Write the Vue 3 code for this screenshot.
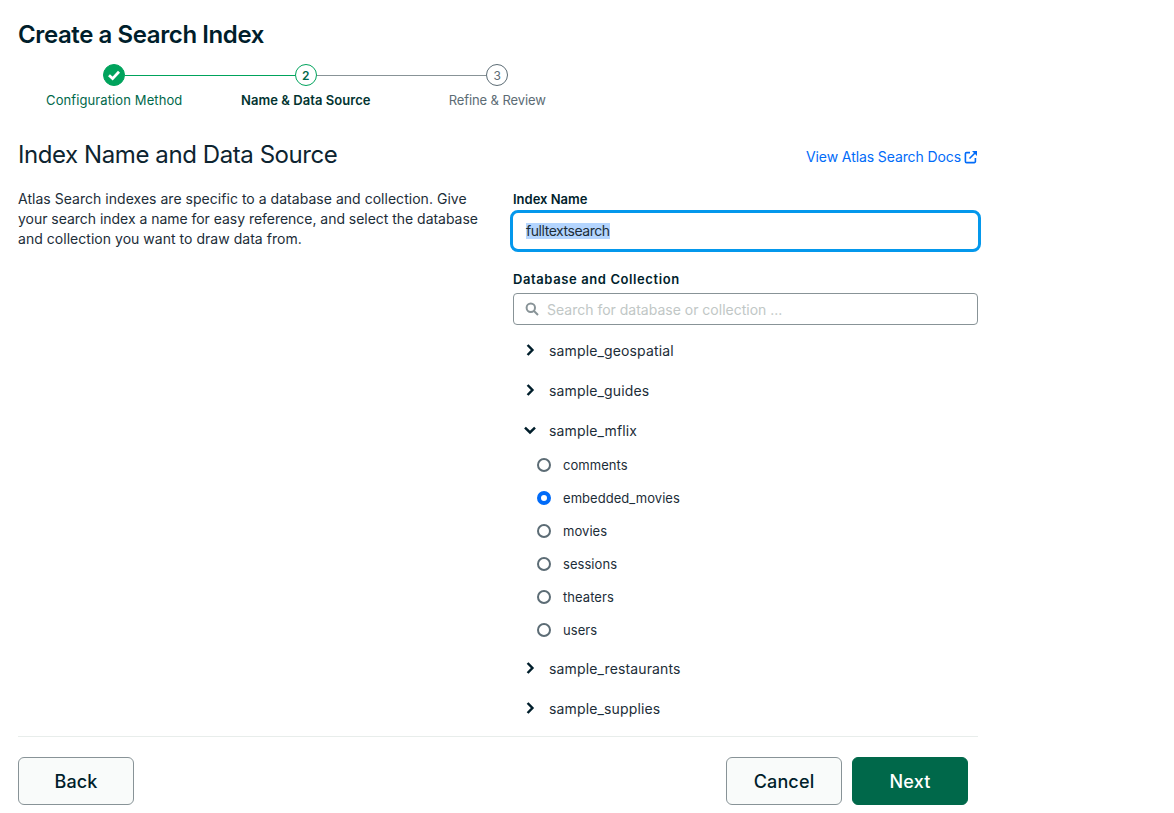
<script setup>
const before = ['sample_geospatial', 'sample_guides']
const collections = ['comments', 'embedded_movies', 'movies', 'sessions', 'theaters', 'users']
const after = ['sample_restaurants', 'sample_supplies']
</script>

<template>
  <div class="page">
    <h1 class="title">Create a Search Index</h1>
    <div class="stepper">
      <div class="step done">
        <div class="track">
          <span class="line hidden"></span>
          <span class="dot filled">
            <svg width="16" height="16" viewBox="0 0 16 16"><path d="M3 8.3 6.6 11.6 13 4.8" fill="none" stroke="#fff" stroke-width="2.8"/></svg>
          </span>
          <span class="line green"></span>
        </div>
        <div class="label">Configuration Method</div>
      </div>
      <div class="step current">
        <div class="track">
          <span class="line green"></span>
          <span class="dot">2</span>
          <span class="line grey"></span>
        </div>
        <div class="label">Name &amp; Data Source</div>
      </div>
      <div class="step todo">
        <div class="track">
          <span class="line grey"></span>
          <span class="dot">3</span>
          <span class="line hidden"></span>
        </div>
        <div class="label">Refine &amp; Review</div>
      </div>
    </div>

    <div class="head">
      <h2 class="subtitle">Index Name and Data Source</h2>
      <a class="docs">View Atlas Search Docs
        <svg width="14" height="14" viewBox="0 0 14 14" fill="none" stroke="#016bf8" stroke-width="1.6">
          <path d="M6 2.6H2.6a1.2 1.2 0 0 0-1.2 1.2v7.6a1.2 1.2 0 0 0 1.2 1.2h7.6a1.2 1.2 0 0 0 1.2-1.2V8"/>
          <path d="M5.5 8.5 12 2"/>
          <path d="M8 1h5v5z" fill="#016bf8" stroke="none"/>
        </svg>
      </a>
    </div>

    <div class="columns">
      <p class="desc">Atlas Search indexes are specific to a database and collection. Give<br><span class="tight">your search index a name for easy reference, and select the database</span><br>and collection you want to draw data from.</p>
      <div class="form">
        <div class="field-label">Index Name</div>
        <div class="name-input"><span class="selected">fulltextsearch</span></div>
        <div class="field-label second">Database and Collection</div>
        <div class="search">
          <svg width="14" height="14" viewBox="0 0 14 14" fill="none" stroke="#889397" stroke-width="2">
            <circle cx="5.8" cy="5.8" r="4.2"/>
            <path d="M9 9 13 13"/>
          </svg>
          <span>Search for database or collection ...</span>
        </div>
        <div class="tree">
          <div v-for="d in before" :key="d" class="db">
            <svg class="chev" width="16" height="16" viewBox="0 0 16 16"><path d="M5.6 3 10.4 8 5.6 13" fill="none" stroke="#001e2b" stroke-width="2.5"/></svg>
            <span>{{ d }}</span>
          </div>
          <div class="db">
            <svg class="chev" width="16" height="16" viewBox="0 0 16 16"><path d="M3 5.6 8 10.4 13 5.6" fill="none" stroke="#001e2b" stroke-width="2.5"/></svg>
            <span>sample_mflix</span>
          </div>
          <div class="colls">
            <div v-for="c in collections" :key="c" class="coll">
              <span class="radio" :class="{ on: c === 'embedded_movies' }"></span>
              <span>{{ c }}</span>
            </div>
          </div>
          <div v-for="d in after" :key="d" class="db">
            <svg class="chev" width="16" height="16" viewBox="0 0 16 16"><path d="M5.6 3 10.4 8 5.6 13" fill="none" stroke="#001e2b" stroke-width="2.5"/></svg>
            <span>{{ d }}</span>
          </div>
        </div>
      </div>
    </div>

    <div class="footer">
      <button class="btn">Back</button>
      <div class="right">
        <button class="btn">Cancel</button>
        <button class="btn primary">Next</button>
      </div>
    </div>
  </div>
</template>

<style>
html, body { margin: 0; background: #fff; }
</style>

<style scoped>
.page {
  width: 960px;
  padding-left: 18px;
  font-family: Inter, "Liberation Sans", sans-serif;
  color: #001e2b;
}
.title {
  margin: 0;
  padding-top: 21px;
  font-size: 24px;
  line-height: 28px;
  font-weight: 600;
  letter-spacing: -0.4px;
}
.stepper {
  display: flex;
  margin-top: 14px;
  padding-left: 0.5px;
}
.step {
  width: 191.5px;
  display: flex;
  flex-direction: column;
  align-items: center;
}
.track {
  width: 100%;
  height: 24px;
  display: flex;
  align-items: center;
}
.line { flex: 1; height: 1px; }
.line.hidden { background: transparent; }
.line.green { background: #00a35c; }
.line.grey { background: #889397; }
.dot {
  width: 22px;
  height: 22px;
  box-sizing: border-box;
  border-radius: 50%;
  border: 1px solid #00a35c;
  display: flex;
  align-items: center;
  justify-content: center;
  font-size: 12px;
  font-weight: 600;
  color: #00684a;
}
.dot.filled { background: #00a35c; }
.todo .dot { border-color: #5c6c75; color: #5c6c75; font-weight: 400; }
.label {
  margin-top: 3px;
  font-size: 13px;
  line-height: 20px;
  white-space: nowrap;
}
.done .label { color: #00684a; letter-spacing: 0.1px; }
.current .label { color: #023430; font-weight: 600; letter-spacing: 0.05px; }
.todo .label { color: #5c6c75; letter-spacing: -0.1px; }
.head {
  display: flex;
  justify-content: space-between;
  align-items: center;
  margin-top: 29px;
}
.subtitle {
  margin: 0;
  font-size: 24px;
  line-height: 32px;
  font-weight: 400;
  letter-spacing: -0.42px;
  color: #0d2430;
}
.docs {
  display: flex;
  align-items: center;
  gap: 3px;
  margin-top: 4px;
  font-size: 14px;
  line-height: 20px;
  color: #016bf8;
  letter-spacing: -0.1px;
}
.columns {
  display: flex;
  justify-content: space-between;
  margin-top: 18px;
}
.desc {
  width: 470px;
  margin: 0;
  font-size: 14px;
  line-height: 20px;
  letter-spacing: 0.03px;
  white-space: nowrap;
  color: #1c2d38;
}
.tight { letter-spacing: -0.03px; }
.form { width: 465px; }
.field-label {
  font-size: 13px;
  line-height: 20px;
  font-weight: 600;
  letter-spacing: 0;
}
.field-label.second { margin-top: 17px; letter-spacing: 0.6px; }
.name-input {
  margin: 1px -3px 0 -3px;
  height: 42px;
  box-sizing: border-box;
  border: 3px solid #0498ec;
  border-radius: 8px;
  display: flex;
  align-items: center;
  padding-left: 13px;
  font-size: 14px;
  letter-spacing: -0.45px;
  color: #1c2d38;
}
.selected { background: #b4d5fe; line-height: 16px; }
.search {
  margin-top: 4px;
  height: 32px;
  box-sizing: border-box;
  border: 1px solid #889397;
  border-radius: 4px;
  display: flex;
  align-items: center;
  gap: 8px;
  padding-left: 11px;
  font-size: 14px;
  letter-spacing: 0;
  color: #c1c7c6;
}
.tree { margin-top: 5px; color: #1c2d38; }
.db {
  height: 40px;
  display: flex;
  align-items: center;
  gap: 11px;
  padding-left: 9px;
  font-size: 14px;
  letter-spacing: 0.14px;
}
.colls { margin-top: -2px; padding-bottom: 2px; }
.coll {
  height: 33px;
  display: flex;
  align-items: center;
  gap: 12px;
  padding-left: 24px;
  font-size: 13px;
  letter-spacing: 0.05px;
}
.radio {
  width: 14px;
  height: 14px;
  box-sizing: border-box;
  border: 2px solid #5c6c75;
  border-radius: 50%;
  background: #fff;
}
.radio.on { border: 4px solid #016bf8; }
.footer {
  margin-top: 8px;
  border-top: 1px solid #e8edeb;
  padding-top: 20px;
  display: flex;
  justify-content: space-between;
}
.right { display: flex; gap: 10px; margin-right: 10px; }
.btn {
  width: 116px;
  height: 48px;
  box-sizing: border-box;
  border: 1px solid #889397;
  border-radius: 6px;
  background: #f9fbfa;
  color: #001e2b;
  font-family: inherit;
  font-size: 18px;
  font-weight: 500;
  letter-spacing: 0.15px;
}
.btn.primary {
  background: #00684a;
  border-color: #00684a;
  color: #fff;
}
</style>
